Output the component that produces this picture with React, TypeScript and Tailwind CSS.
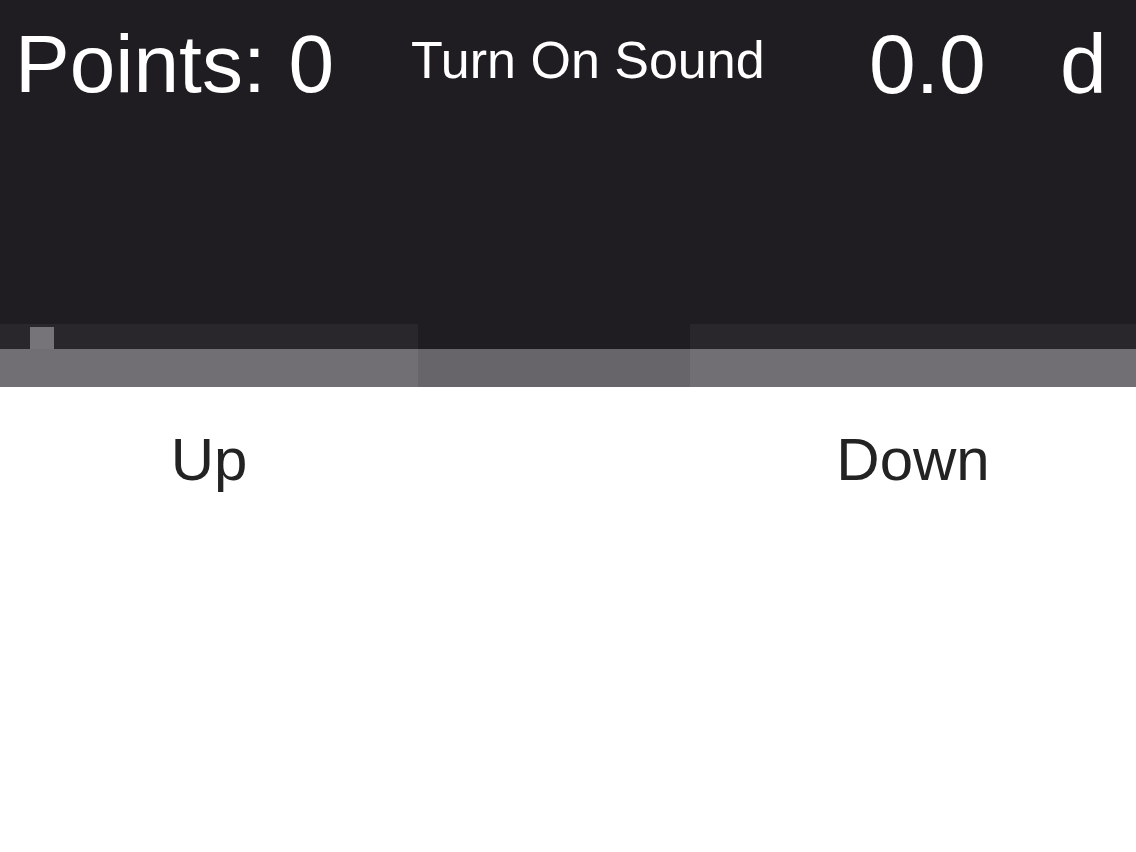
export default function App() {
  return (
    <div className="w-[1136px] h-[852px] bg-white overflow-hidden" style={{ fontFamily: '"Liberation Sans", Arial, sans-serif' }}>
      <div className="h-[324px] bg-[#1f1d21] text-white grid grid-cols-[411px_458px_191px_1fr] items-start">
        <div className="pl-[15px] mt-[23px] text-[82px] leading-none">Points: 0</div>
        <div className="mt-[34px] text-[52px] leading-none">Turn On Sound</div>
        <div className="mt-[22px] text-[84px] leading-none">0.0</div>
        <div className="mt-[22px] text-[84px] leading-none">d</div>
      </div>

      <div className="h-[63px] flex">
        <div className="w-[418px] flex flex-col">
          <div className="h-[25px] bg-[#29272b] flex items-end">
            <div className="ml-[30px] w-[24px] h-[22px] bg-[#767478]" />
          </div>
          <div className="flex-1 bg-[#716f73]" />
        </div>
        <div className="w-[272px] flex flex-col">
          <div className="h-[25px] bg-[#1f1d21]" />
          <div className="flex-1 bg-[#676569]" />
        </div>
        <div className="flex-1 flex flex-col">
          <div className="h-[25px] bg-[#29272b]" />
          <div className="flex-1 bg-[#716f73]" />
        </div>
      </div>

      <div className="flex text-[#232323] text-[60px] leading-none">
        <div className="w-[418px] mt-[43px] text-center">Up</div>
        <div className="w-[272px]" />
        <div className="flex-1 mt-[43px] text-center">Down</div>
      </div>
    </div>
  );
}
